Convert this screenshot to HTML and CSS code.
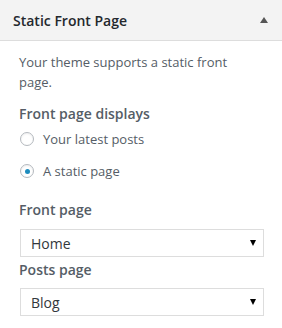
FILE: index.html
```html
<!DOCTYPE html>
<html>
<head>
<meta charset="utf-8">
<link rel="stylesheet" href="styles.css">
</head>
<body>
<div class="section">
  <div class="section-head">
    <h3 class="section-title">Static Front Page</h3>
    <span class="toggle"></span>
  </div>
  <div class="section-body">
    <p class="desc">Your theme supports a static front page.</p>
    <div class="field-title">Front page displays</div>
    <div class="radios">
      <label class="radio-row"><span class="radio"></span><span>Your latest posts</span></label>
      <label class="radio-row"><span class="radio checked"></span><span>A static page</span></label>
    </div>
    <div class="field-title field-gap">Front page</div>
    <div class="select"><span>Home</span><span class="arrow"></span></div>
    <div class="field-title">Posts page</div>
    <div class="select"><span>Blog</span><span class="arrow"></span></div>
  </div>
</div>
</body>
</html>
```
FILE: styles.css
```css
html, body {
  margin: 0;
  padding: 0;
  background: #ffffff;
}
body {
  font-family: "Open Sans", "Noto Sans", sans-serif;
  color: #555d66;
  width: 282px;
  height: 328px;
  overflow: hidden;
}
.section-head {
  height: 41px;
  box-sizing: border-box;
  background: #f3f3f3;
  border-bottom: 1px solid #dddddd;
  display: flex;
  align-items: center;
  justify-content: space-between;
  padding: 0 14px 0 13px;
}
.section-title {
  margin: 0;
  font-size: 14px;
  font-weight: 600;
  color: #23282d;
  line-height: 21px;
}
.toggle {
  width: 0;
  height: 0;
  border-left: 4px solid transparent;
  border-right: 4px solid transparent;
  border-bottom: 6px solid #555555;
}
.section-body {
  padding: 11px 19px 0 19px;
}
.desc {
  margin: 0 0 12px 0;
  font-size: 13px;
  line-height: 20px;
}
.field-title {
  font-size: 14px;
  font-weight: 600;
  color: #555d66;
  line-height: 20px;
}
.field-gap {
  margin-top: 19px;
}
.radios {
  display: flex;
  flex-direction: column;
  gap: 12px;
  padding-top: 5px;
}
.radio-row {
  display: flex;
  align-items: center;
  gap: 9px;
  font-size: 13px;
  line-height: 20px;
  height: 20px;
}
.radio {
  width: 14px;
  height: 14px;
  box-sizing: border-box;
  border: 1px solid #b4b9be;
  border-radius: 50%;
  background: #ffffff;
  box-shadow: inset 0 1px 2px rgba(0,0,0,0.07);
  display: flex;
  align-items: center;
  justify-content: center;
  margin-left: 1px;
}
.radio.checked::after {
  content: "";
  width: 5px;
  height: 5px;
  border-radius: 50%;
  background: #1e8cbe;
}
.select {
  margin: 9px 0 3px 1px;
  width: 244px;
  height: 28px;
  box-sizing: border-box;
  border: 1px solid #dddddd;
  background: #ffffff;
  display: flex;
  align-items: center;
  justify-content: space-between;
  padding: 0 7px 0 10px;
  font-size: 14px;
  color: #32373c;
}
.select + .field-title + .select {
  margin-top: 8px;
}
.arrow {
  width: 0;
  height: 0;
  border-left: 3px solid transparent;
  border-right: 3px solid transparent;
  border-top: 6px solid #000000;
}
```
